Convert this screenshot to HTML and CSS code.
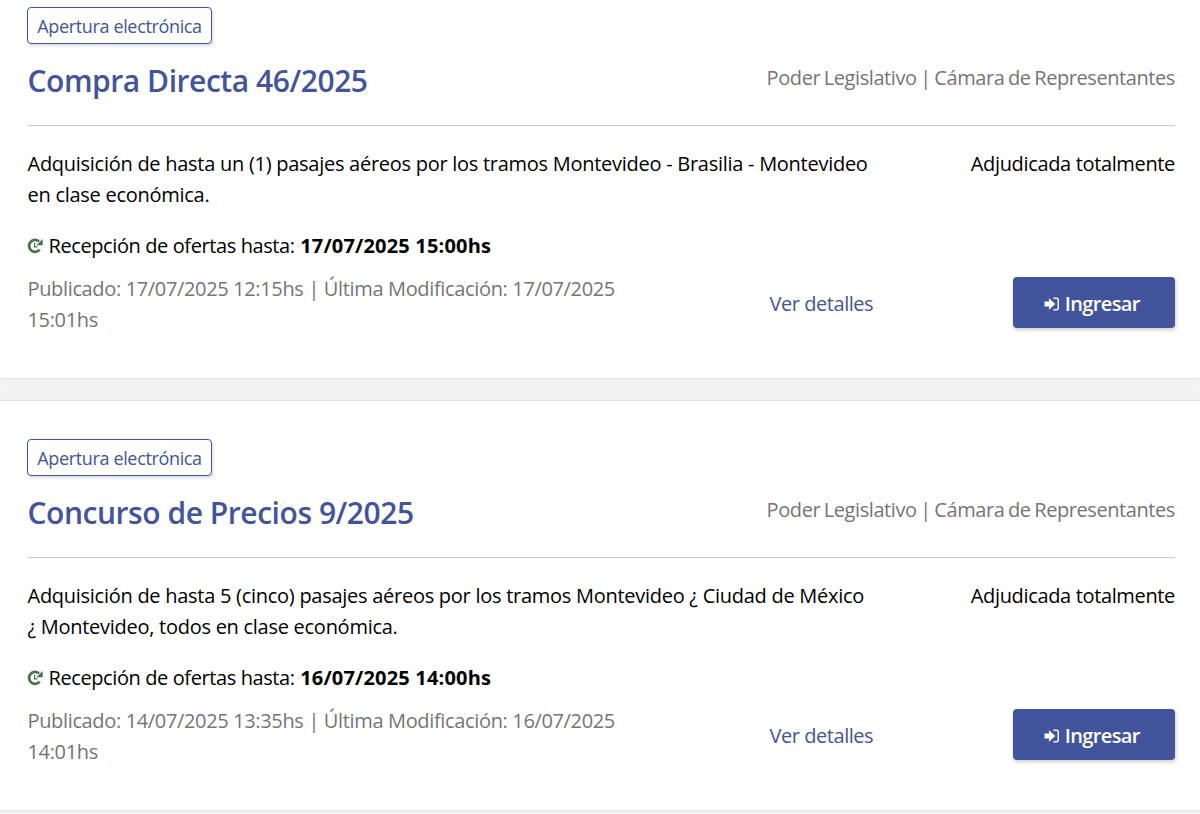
FILE: index.html
```html
<!DOCTYPE html>
<html lang="es">
<head>
<meta charset="utf-8">
<title>Compras</title>
<link rel="stylesheet" href="styles.css">
</head>
<body>
<svg class="defs" aria-hidden="true">
  <symbol id="clock" viewBox="0 0 16 16"><path d="M12.7 11.7A6 6 0 1 1 12 3.4" fill="none" stroke="currentColor" stroke-width="2.7"/><path d="M15.7 .9V7.2H9.3Z" fill="currentColor"/><path d="M7.6 4.8V8.9H10.5" fill="none" stroke="currentColor" stroke-width="1.2"/></symbol>
  <symbol id="enter" viewBox="0 0 16 14"><path d="M.5 4.5H5V1.2L11.2 7 5 12.8V9.5H.5Z" fill="currentColor"/><path d="M9.5 1.3H12.3A2 2 0 0 1 14.3 3.3V10.7A2 2 0 0 1 12.3 12.7H9.5" fill="none" stroke="currentColor" stroke-width="1.4"/></symbol>
</svg>
<main class="list">
  <article class="card card-first">
    <span class="tag">Apertura electrónica</span>
    <header class="head"><h2 class="title">Compra Directa 46/2025</h2><span class="org">Poder Legislativo | Cámara de Representantes</span></header>
    <div class="row"><p class="desc">Adquisición de hasta un (1) pasajes aéreos por los tramos Montevideo - Brasilia - Montevideo<br>en clase económica.</p><span class="status">Adjudicada totalmente</span></div>
    <p class="deadline"><svg class="clock"><use href="#clock"/></svg><span class="until">Recepción de ofertas hasta:</span><strong class="date">17/07/2025 15:00hs</strong></p>
    <div class="foot"><p class="meta">Publicado: 17/07/2025 12:15hs | Última Modificación: 17/07/2025<br>15:01hs</p><a class="link">Ver detalles</a><a class="button"><svg class="enter"><use href="#enter"/></svg><span>Ingresar</span></a></div>
  </article>
  <article class="card">
    <span class="tag">Apertura electrónica</span>
    <header class="head"><h2 class="title">Concurso de Precios 9/2025</h2><span class="org">Poder Legislativo | Cámara de Representantes</span></header>
    <div class="row"><p class="desc">Adquisición de hasta 5 (cinco) pasajes aéreos por los tramos Montevideo ¿ Ciudad de México<br>¿ Montevideo, todos en clase económica.</p><span class="status">Adjudicada totalmente</span></div>
    <p class="deadline"><svg class="clock"><use href="#clock"/></svg><span class="until">Recepción de ofertas hasta:</span><strong class="date">16/07/2025 14:00hs</strong></p>
    <div class="foot"><p class="meta">Publicado: 14/07/2025 13:35hs | Última Modificación: 16/07/2025<br>14:01hs</p><a class="link">Ver detalles</a><a class="button"><svg class="enter"><use href="#enter"/></svg><span>Ingresar</span></a></div>
  </article>
</main>
</body>
</html>
```
FILE: styles.css
```css
* { box-sizing: border-box; }
html { overflow: hidden; }
body { margin: 0; background: #f4f4f5; color: #000; font: 20px/31px "Segoe UI", "Open Sans", "Noto Sans", sans-serif; letter-spacing: -.35px; white-space: nowrap; }
p, h2 { margin: 0; }
.defs { display: block; width: 0; height: 0; }
.list { display: flex; flex-direction: column; gap: 21px; height: 814px; overflow: hidden; }
.card { flex: none; height: 411px; padding: 38px 25px 0 27.5px; background: #fff; border-top: 1px solid #e3e5e5; border-bottom: 1px solid #e3e5e5; box-shadow: 0 2px 12px rgba(60, 60, 60, .04); }
.card-first { height: 379px; padding-top: 7px; border-top: 0; }
.tag { display: flex; align-items: center; justify-content: center; width: 185px; height: 36.5px; margin-left: -.5px; padding-top: 2px; border: 1px solid #42549c; border-radius: 4px; color: #42549c; font-size: 18px; box-shadow: 1px 2px 3px rgba(66, 84, 156, .2); }
.head { display: flex; justify-content: space-between; height: 82.5px; border-bottom: 1px solid #c9c9cb; }
.title { padding-top: 16px; color: #42549c; font-size: 30px; line-height: 41px; font-weight: 600; letter-spacing: -.45px; }
.org { padding-top: 18px; color: #757575; letter-spacing: -.42px; word-spacing: -1.2px; }
.row { display: flex; justify-content: space-between; padding-top: 22px; }
.desc { letter-spacing: -.27px; }
.deadline { display: flex; align-items: center; margin-top: 19.5px; }
.clock { width: 16px; height: 16px; margin: 1px 5.5px 0 -.5px; color: #47734a; }
.until { letter-spacing: -.4px; }
.date { margin-left: 5.5px; letter-spacing: .18px; }
.foot { display: flex; margin-top: 12px; }
.meta { width: 742px; color: #757575; letter-spacing: -.35px; }
.link { padding-top: 15px; color: #42549c; letter-spacing: -.45px; }
.button { display: flex; align-items: center; justify-content: center; width: 162px; height: 51px; margin: 4px 0 0 auto; padding-top: 2px; border-radius: 4px; background: #42549c; color: #fff; font-weight: 600; letter-spacing: -.65px; box-shadow: 1px 2px 4px rgba(0, 0, 0, .2); }
.enter { width: 16px; height: 14px; margin: 2px 4.5px 0 -4px; }
```
